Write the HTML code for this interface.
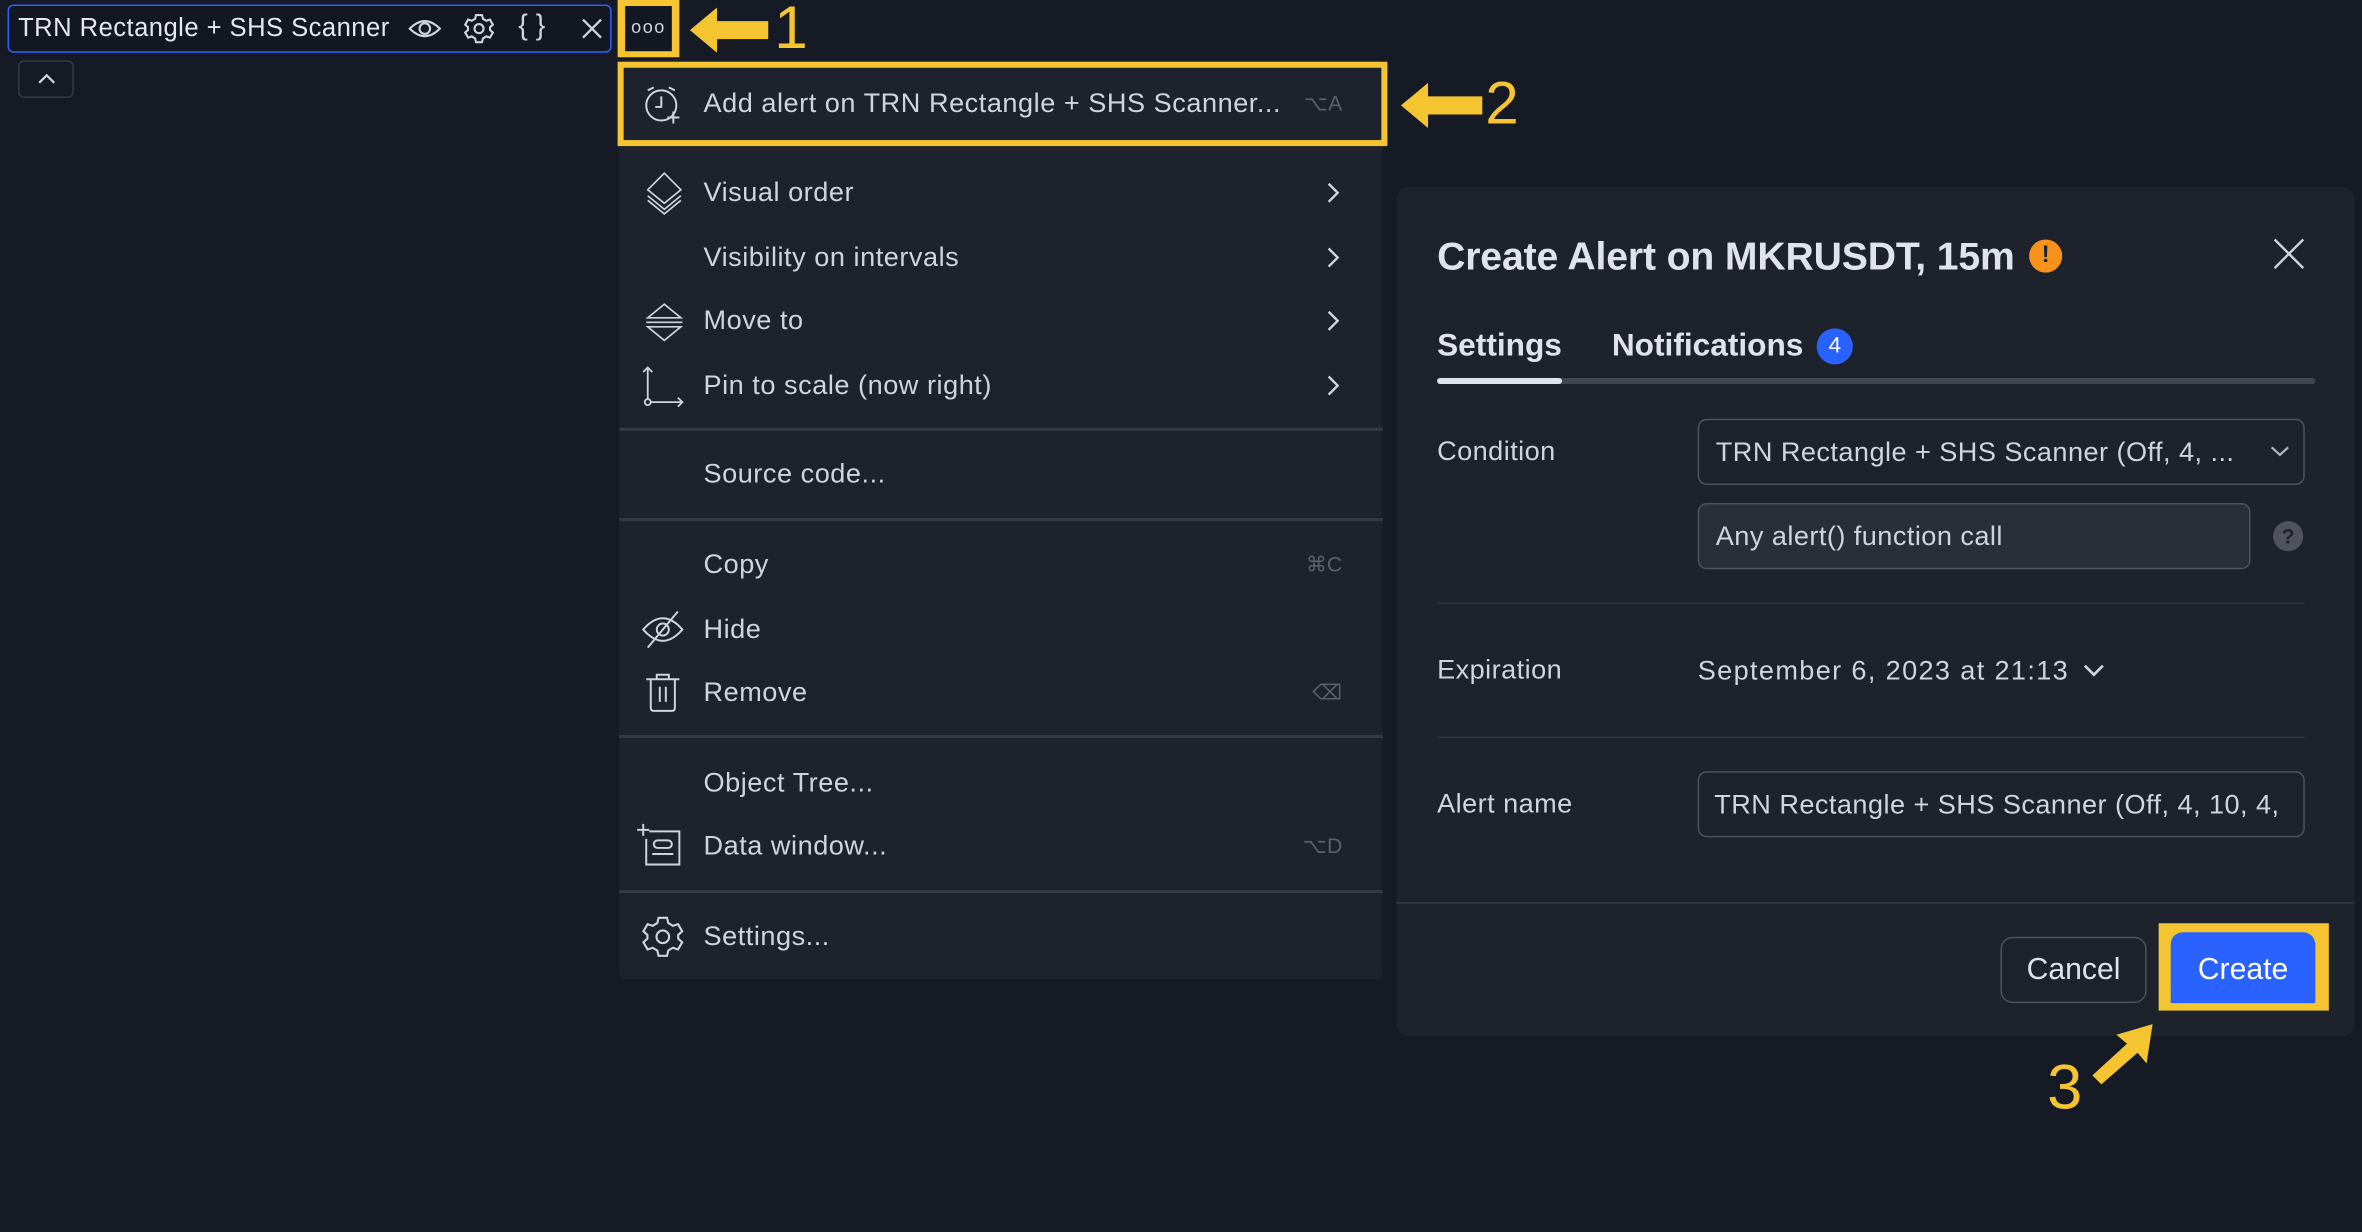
<!DOCTYPE html>
<html><head><meta charset="utf-8"><style>
html,body{margin:0;padding:0;background:#161a25;width:2362px;height:1232px;overflow:hidden}
#s{position:absolute;left:0;top:0;width:1568px;height:818px;transform:scale(1.50638,1.50611);transform-origin:0 0;font-family:"Liberation Sans",sans-serif;color:#d1d4dc}
.a{position:absolute}
.t{position:absolute;white-space:nowrap}
.mi{position:absolute;left:467px;font-size:18px;color:#d1d4dc;transform:translateY(-50%);letter-spacing:0.35px;white-space:nowrap}
.ch{position:absolute;left:879px}
.sep{position:absolute;left:411px;width:507px;height:2px;background:#363a45}
.sc{position:absolute;right:677px;font-size:14px;color:#5d606b;transform:translateY(-50%)}
svg{position:absolute;overflow:visible}
.lbl{position:absolute;left:954px;font-size:18px;color:#d1d4dc;transform:translateY(-50%);letter-spacing:0.3px}
.inp{position:absolute;border:1px solid #50535e;border-radius:6px;box-sizing:border-box;font-size:18px;color:#d1d4dc;padding-left:11px;display:flex;align-items:center;white-space:nowrap;overflow:hidden;letter-spacing:0.3px}
</style></head><body><div id="s">
<div class="a" style="left:5px;top:3px;width:401px;height:32px;border:1px solid #2962ff;border-radius:4px;box-sizing:border-box;background:#131722"></div>
<div class="t" style="left:12px;top:9px;font-size:17px;color:#e6e8ee;letter-spacing:0.3px">TRN Rectangle + SHS Scanner</div>
<svg style="left:270px;top:9px" width="24" height="20" viewBox="0 0 24 20" fill="none" stroke="#d1d4dc" stroke-width="1.4"><path d="M2 10 Q12 0 22 10 Q12 20 2 10Z"/><circle cx="12" cy="10" r="3.5"/></svg>
<svg style="left:308px;top:9px" width="20" height="20" viewBox="0 0 20 20" fill="none" stroke="#d1d4dc" stroke-width="1.4"><path d="M8 1h4l.6 2.5 2.2 1.3 2.4-.8 2 3.4-1.9 1.7v1.8l1.9 1.7-2 3.4-2.4-.8-2.2 1.3L12 19H8l-.6-2.5-2.2-1.3-2.4.8-2-3.4 1.9-1.7V9.1L.8 7.4l2-3.4 2.4.8 2.2-1.3z"/><circle cx="10" cy="10" r="3"/></svg>
<div class="t" style="left:344px;top:7px;font-size:19px;color:#d1d4dc">{ }</div>
<svg style="left:386px;top:12px" width="14" height="14" viewBox="0 0 14 14" stroke="#d1d4dc" stroke-width="1.5"><path d="M1 1L13 13M13 1L1 13"/></svg>
<div class="a" style="left:410px;top:0;width:41px;height:38px;background:#f5c531"></div>
<div class="a" style="left:415px;top:4px;width:31px;height:30px;background:#131722"></div>
<div class="t" style="left:419px;top:11px;font-size:12px;color:#d1d4dc;letter-spacing:1px">ooo</div>
<svg style="left:456px;top:3px" width="60" height="34" viewBox="0 0 60 34"><path d="M2 17L20 2V11H54V23H20V32Z" fill="#f5c531"/></svg>
<div class="t" style="left:514px;top:-3px;font-size:40px;color:#f5c531">1</div>
<div class="a" style="left:12px;top:40px;width:37px;height:25px;border:1px solid #363a45;border-radius:4px;box-sizing:border-box"></div>
<svg style="left:25px;top:48px" width="12" height="8" viewBox="0 0 12 8" fill="none" stroke="#d1d4dc" stroke-width="1.5"><path d="M1 7L6 2L11 7"/></svg>

<div class="a" style="left:411px;top:40px;width:507px;height:610px;background:#1e222d;border-radius:4px"></div>
<div class="a" style="left:410px;top:41px;width:511px;height:56px;border:4px solid #f5c531;box-sizing:border-box"></div>
<svg style="left:427px;top:56px" width="28" height="28" viewBox="0 0 28 28" fill="none" stroke="#d1d4dc" stroke-width="1.3"><circle cx="12" cy="14" r="10"/><path d="M12 8v7h-4M3 4l4-2M21 4l-4-2M20 18v8M16 22h8"/></svg>
<div class="mi" style="top:69px">Add alert on TRN Rectangle + SHS Scanner...</div>
<div class="sc" style="top:69px">⌥A</div>
<svg style="left:928px;top:53px" width="58" height="34" viewBox="0 0 58 34"><path d="M2 17L20 2V11H56V23H20V32Z" fill="#f5c531"/></svg>
<div class="t" style="left:986px;top:47px;font-size:40px;color:#f5c531">2</div>

<svg style="left:428px;top:114px" width="26" height="28" viewBox="0 0 26 28" fill="none" stroke="#d1d4dc" stroke-width="1.1"><path d="M13 1L24 12L13 21L2 12Z"/><path d="M2 16L13 25L24 16M2 19L13 28L24 19"/></svg>
<div class="mi" style="top:128px">Visual order</div>
<div class="mi" style="top:171px">Visibility on intervals</div>
<svg style="left:428px;top:201px" width="26" height="26" viewBox="0 0 26 26" fill="none" stroke="#d1d4dc" stroke-width="1.1"><path d="M2 10L13 1L24 10ZM2 16L13 25L24 16Z"/><path d="M1 13h24"/></svg>
<div class="mi" style="top:213px">Move to</div>
<svg style="left:426px;top:242px" width="28" height="28" viewBox="0 0 28 28" fill="none" stroke="#d1d4dc" stroke-width="1.2"><path d="M4 23V2M1 5l3-3 3 3M6 25h21M24 22l3 3-3 3"/><circle cx="4" cy="25" r="2"/></svg>
<div class="mi" style="top:256px">Pin to scale (now right)</div>
<svg class="ch" style="top:120px" width="12" height="16" viewBox="0 0 12 16" fill="none" stroke="#d1d4dc" stroke-width="1.6"><path d="M3 2l6 6-6 6"/></svg>
<svg class="ch" style="top:163px" width="12" height="16" viewBox="0 0 12 16" fill="none" stroke="#d1d4dc" stroke-width="1.6"><path d="M3 2l6 6-6 6"/></svg>
<svg class="ch" style="top:205px" width="12" height="16" viewBox="0 0 12 16" fill="none" stroke="#d1d4dc" stroke-width="1.6"><path d="M3 2l6 6-6 6"/></svg>
<svg class="ch" style="top:248px" width="12" height="16" viewBox="0 0 12 16" fill="none" stroke="#d1d4dc" stroke-width="1.6"><path d="M3 2l6 6-6 6"/></svg>
<div class="sep" style="top:284px"></div>
<div class="mi" style="top:315px">Source code...</div>
<div class="sep" style="top:344px"></div>
<div class="mi" style="top:375px">Copy</div>
<div class="sc" style="top:375px">⌘C</div>
<svg style="left:426px;top:405px" width="28" height="26" viewBox="0 0 28 26" fill="none" stroke="#d1d4dc" stroke-width="1.3"><path d="M1 13Q14 -2 27 13Q14 28 1 13Z"/><circle cx="14" cy="13" r="4"/><path d="M4 25L24 1"/></svg>
<div class="mi" style="top:418px">Hide</div>
<svg style="left:428px;top:446px" width="24" height="28" viewBox="0 0 24 28" fill="none" stroke="#d1d4dc" stroke-width="1.3"><path d="M1 5h22M8 5V2h8v3M4 5v19q0 2 2 2h12q2 0 2-2V5M10 10v10M14 10v10"/></svg>
<div class="mi" style="top:460px">Remove</div>
<div class="sc" style="top:460px">⌫</div>
<div class="sep" style="top:488px"></div>
<div class="mi" style="top:520px">Object Tree...</div>
<svg style="left:422px;top:546px" width="32" height="30" viewBox="0 0 32 30" fill="none" stroke="#d1d4dc" stroke-width="1.3"><path d="M1 5h8M5 1v8M9 6h20v22H7V11"/><rect x="12" y="12" width="12" height="5" rx="2.5"/><path d="M11 21h14"/></svg>
<div class="mi" style="top:562px">Data window...</div>
<div class="sc" style="top:562px">⌥D</div>
<div class="sep" style="top:591px"></div>
<svg style="left:426px;top:608px" width="28" height="28" viewBox="0 0 20 20" fill="none" stroke="#d1d4dc" stroke-width="1"><path d="M8 1h4l.6 2.5 2.2 1.3 2.4-.8 2 3.4-1.9 1.7v1.8l1.9 1.7-2 3.4-2.4-.8-2.2 1.3L12 19H8l-.6-2.5-2.2-1.3-2.4.8-2-3.4 1.9-1.7V9.1L.8 7.4l2-3.4 2.4.8 2.2-1.3z"/><circle cx="10" cy="10" r="3"/></svg>
<div class="mi" style="top:622px">Settings...</div>

<div class="a" style="left:927px;top:124px;width:636px;height:564px;background:#1e222d;border-radius:8px"></div>
<div class="t" style="left:954px;top:155px;font-size:26px;font-weight:bold;color:#e0e3eb;letter-spacing:-0.1px">Create Alert on MKRUSDT, 15m</div>
<div class="a" style="left:1347px;top:159px;width:22px;height:22px;border-radius:50%;background:#f7931a;color:#1e222d;font-weight:bold;font-size:16px;text-align:center;line-height:22px">!</div>
<svg style="left:1509px;top:158px" width="21" height="21" viewBox="0 0 21 21" stroke="#d1d4dc" stroke-width="1.6"><path d="M1 1L20 20M20 1L1 20"/></svg>
<div class="t" style="left:954px;top:218px;font-size:21px;font-weight:bold;color:#e0e3eb">Settings</div>
<div class="t" style="left:1070px;top:218px;font-size:21px;font-weight:bold;color:#e0e3eb">Notifications</div>
<div class="a" style="left:1206px;top:218px;width:24px;height:24px;border-radius:50%;background:#2962ff;color:#fff;font-size:15px;text-align:center;line-height:24px">4</div>
<div class="a" style="left:954px;top:251px;width:583px;height:4px;background:#434651;border-radius:2px"></div>
<div class="a" style="left:954px;top:251px;width:83px;height:4px;background:#e0e3eb;border-radius:2px"></div>
<div class="lbl" style="top:300px">Condition</div>
<div class="inp" style="left:1127px;top:278px;width:403px;height:44px">TRN Rectangle + SHS Scanner (Off, 4, ...</div>
<svg style="left:1507px;top:295px" width="13" height="9" viewBox="0 0 13 9" fill="none" stroke="#b2b5be" stroke-width="1.5"><path d="M1 2l5.5 5L12 2"/></svg>
<div class="inp" style="left:1127px;top:334px;width:367px;height:44px;background:#2a2e39">Any alert() function call</div>
<div class="a" style="left:1509px;top:346px;width:20px;height:20px;border-radius:50%;background:#50535e;color:#1e222d;font-size:14px;font-weight:bold;text-align:center;line-height:20px">?</div>
<div class="a" style="left:954px;top:400px;width:576px;height:1px;background:#2f3340"></div>
<div class="lbl" style="top:445px">Expiration</div>
<div class="t" style="left:1127px;top:435px;font-size:18px;color:#d1d4dc;letter-spacing:0.9px">September 6, 2023 at 21:13</div>
<svg style="left:1382px;top:440px" width="16" height="10" viewBox="0 0 16 10" fill="none" stroke="#d1d4dc" stroke-width="1.8"><path d="M2 2l6 6 6-6"/></svg>
<div class="a" style="left:954px;top:489px;width:576px;height:1px;background:#2f3340"></div>
<div class="lbl" style="top:534px">Alert name</div>
<div class="inp" style="left:1127px;top:512px;width:403px;height:44px;padding-left:10px">TRN Rectangle + SHS Scanner (Off, 4, 10, 4,</div>
<div class="a" style="left:927px;top:599px;width:636px;height:1px;background:#363a45"></div>
<div class="a" style="left:1328px;top:622px;width:97px;height:44px;border:1px solid #50535e;border-radius:8px;box-sizing:border-box;font-size:20px;color:#e0e3eb;text-align:center;line-height:42px">Cancel</div>
<div class="a" style="left:1433px;top:613px;width:113px;height:58px;background:#f5c531"></div>
<div class="a" style="left:1441px;top:619px;width:96px;height:47px;background:#2962ff;border-radius:8px 8px 0 0;font-size:20px;color:#fff;text-align:center;line-height:50px">Create</div>
<svg style="left:1385px;top:678px" width="50" height="44" viewBox="0 0 50 44"><path d="M44 2L40 28L34 21L10 42L4 36L27 15L20 9Z" fill="#f5c531"/></svg>
<div class="t" style="left:1359px;top:698px;font-size:42px;color:#f5c531">3</div>
</div></body></html>
